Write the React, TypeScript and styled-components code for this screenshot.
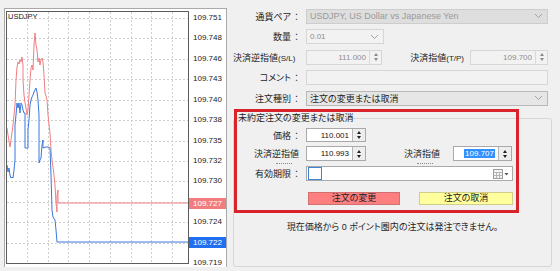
import styled, { createGlobalStyle } from "styled-components";

const GlobalStyle = createGlobalStyle`
  html, body {
    margin: 0;
    padding: 0;
  }
  body {
    width: 560px;
    height: 271px;
    overflow: hidden;
    background: #f0f0f0;
    font-family: "Liberation Sans", "Noto Sans CJK JP", sans-serif;
    color: #1e1e1e;
  }
`;

// chart data, in page pixels (plot area spans 7..187 x 12..262)
const PRICES = [
  "109.751", "109.748", "109.746", "109.743", "109.740", "109.738", "109.735",
  "109.732", "109.730", "109.727", "109.724", "109.722", "109.719",
];
const PLOT_TOP = 11;
const priceY = (i: number) => 18 + i * 20.42;

const ASK_Y = 203;
const BID_Y = 242;

const ASK_LINE =
  "7,128 8,135 10,147 11,140 13,125 15,105 16,80 17,67 18,62 19,64 20,60 21,62 22,57 23,65 23,80 24,95 25,103 26,108 27,115 28,110 29,95 30,80 31,68 32,65 33,70 34,45 35,33 36,45 37,50 38,62 39,58 40,65 41,60 42,58 43,62 44,75 45,93 46,96 47,100 48,115 49,125 50,133 51,150 52,160 53,167 54,175 55,185 56,203 57,212 57,195 58,190 58,203 188,203";
const BID_LINE =
  "7,165 8,172 9,168 10,175 11,178 12,177 13,178 14,170 15,160 15,125 16,115 17,103 18,108 19,103 20,113 21,103 22,105 23,110 24,113 25,113 25,148 28,148 28,130 29,120 30,105 31,100 32,97 33,95 34,92 35,90 36,88 37,92 38,100 39,115 39,163 40,160 41,158 42,145 43,140 43,148 46,147 48,147 50,148 51,175 52,210 53,217 55,220 56,230 57,242 188,242";

const Screen = styled.div`
  display: flex;
  width: 560px;
  height: 271px;
`;

/* ---------- chart ---------- */

const ChartWindow = styled.div`
  box-sizing: border-box;
  margin: 8px 0 0 4px;
  width: 223px;
  height: 259px;
  padding: 2px 0 0 1px;
  display: flex;
  align-items: flex-start;
  background: #fff;
  border: 1px solid #a9a9a9;
  border-bottom: none;
  flex-shrink: 0;
`;

const Plot = styled.div`
  position: relative;
  box-sizing: border-box;
  width: 183px;
  height: 253px;
  border: 1px solid #5c5c5c;
  flex-shrink: 0;

  svg {
    display: block;
  }
`;

const Symbol = styled.span`
  position: absolute;
  left: 1px;
  top: 0;
  font-size: 7.5px;
  line-height: 9px;
  color: #222;
`;

const Axis = styled.div`
  position: relative;
  flex: 1;
  height: 258px;
  margin-top: -2px;
`;

const AxisLabel = styled.span`
  position: absolute;
  left: 4px;
  font-size: 8px;
  line-height: 12px;
  color: #222;
`;

const PriceTag = styled.span<{ $bg: string }>`
  position: absolute;
  left: 0;
  width: 37px;
  height: 11px;
  padding-left: 4px;
  box-sizing: border-box;
  font-size: 8px;
  line-height: 11px;
  color: #fff;
  background: ${(p) => p.$bg};
`;

function Chart() {
  const verticals = Array.from({ length: 8 }, (_, i) => 27 + i * 20.7);
  return (
    <ChartWindow>
      <Plot>
        <svg width="181" height="251" viewBox="7 12 181 251">
          <g stroke="#cfcfcf" strokeWidth="1" strokeDasharray="2 2">
            {PRICES.map((_, i) => (
              <line key={i} x1="7" x2="188" y1={Math.round(priceY(i)) + 0.5} y2={Math.round(priceY(i)) + 0.5} />
            ))}
            {verticals.map((x) => (
              <line key={x} y1="12" y2="263" x1={Math.round(x) + 0.5} x2={Math.round(x) + 0.5} />
            ))}
          </g>
          <polyline points={ASK_LINE} fill="none" stroke="#ef7f82" strokeWidth="1" />
          <polyline points={BID_LINE} fill="none" stroke="#3b78dc" strokeWidth="1" />
        </svg>
        <Symbol>USDJPY</Symbol>
      </Plot>
      <Axis>
        {PRICES.map((p, i) =>
          i === 9 || i === 11 ? null : (
            <AxisLabel key={p} style={{ top: priceY(i) - PLOT_TOP + 2 - 6 }}>
              {p}
            </AxisLabel>
          )
        )}
        <PriceTag $bg="#f27d7f" style={{ top: ASK_Y - PLOT_TOP + 2 - 5.5 }}>
          109.727
        </PriceTag>
        <PriceTag $bg="#1f6ff0" style={{ top: BID_Y - PLOT_TOP + 2 - 5.5 }}>
          109.722
        </PriceTag>
      </Axis>
    </ChartWindow>
  );
}

/* ---------- order form ---------- */

const FormPane = styled.div`
  flex: 1;
  display: flex;
  flex-direction: column;
  padding-top: 8px;
  font-size: 9px;
  font-feature-settings: "palt";
`;

const Row = styled.div<{ $h?: number }>`
  display: flex;
  align-items: center;
  height: ${(p) => p.$h ?? 16}px;
  & + & {
    margin-top: 4.5px;
  }
`;

const Label = styled.div<{ $w: number; $left?: number; $right?: number }>`
  flex-shrink: 0;
  box-sizing: border-box;
  width: ${(p) => p.$w}px;
  padding-left: ${(p) => p.$left ?? 0}px;
  padding-right: ${(p) => p.$right ?? 0}px;
  text-align: ${(p) => (p.$left ? "left" : "right")};
  white-space: nowrap;
  color: #1e1e1e;
`;

const Colon = styled.span`
  display: inline-block;
  width: 11px;
  text-align: center;
  font-feature-settings: normal;
`;

const Small = styled.span`
  font-size: 8px;
`;

type Tone = "disabled" | "muted" | "select" | "white";

const toneStyles: Record<Tone, { bg: string; border: string; color: string }> = {
  disabled: { bg: "#dedede", border: "#cdcdcd", color: "#9a9a9a" },
  muted: { bg: "#f2f2f2", border: "#d6d6d6", color: "#8e8e8e" },
  select: { bg: "#e6e6e6", border: "#b8b8b8", color: "#1e1e1e" },
  white: { bg: "#ffffff", border: "#a9a9a9", color: "#111" },
};

const Box = styled.div<{ $w: number; $tone: Tone; $ml?: number; $h?: number }>`
  box-sizing: border-box;
  display: flex;
  align-items: center;
  flex-shrink: 0;
  width: ${(p) => p.$w}px;
  height: ${(p) => p.$h ?? 15}px;
  margin-left: ${(p) => p.$ml ?? 4}px;
  background: ${(p) => toneStyles[p.$tone].bg};
  border: 1px solid ${(p) => toneStyles[p.$tone].border};
  color: ${(p) => toneStyles[p.$tone].color};
`;

const Value = styled.span<{ $right?: boolean; $num?: boolean }>`
  flex: 1;
  padding: 0 3px;
  text-align: ${(p) => (p.$right ? "right" : "left")};
  font-size: ${(p) => (p.$num ? 8 : 9)}px;
  white-space: nowrap;
  overflow: hidden;
`;

const Selected = styled.span`
  background: #3390ff;
  color: #fff;
  padding: 0 1px;
`;

const Spin = styled.div<{ $dark?: boolean; $w: number }>`
  box-sizing: border-box;
  width: ${(p) => p.$w}px;
  height: 100%;
  display: flex;
  flex-direction: column;
  align-items: center;
  justify-content: center;
  gap: 2px;
  border-left: 1px solid ${(p) => (p.$dark ? "#b5b5b5" : "#dadada")};
  background: ${(p) => (p.$dark ? "#eeeeee" : "transparent")};
`;

const Tri = styled.span<{ $down?: boolean; $dark?: boolean }>`
  width: 0;
  height: 0;
  border-left: 2.5px solid transparent;
  border-right: 2.5px solid transparent;
  ${(p) => (p.$down ? "border-top" : "border-bottom")}: 3px solid
    ${(p) => (p.$dark ? "#222" : "#8a8a8a")};
`;

function Spinner({ dark, w }: { dark?: boolean; w: number }) {
  return (
    <Spin $dark={dark} $w={w}>
      <Tri $dark={dark} />
      <Tri $dark={dark} $down />
    </Spin>
  );
}

const Chevron = () => (
  <svg width="9" height="6" viewBox="0 0 9 6" style={{ marginRight: 4 }}>
    <polyline points="1,1 4.5,4.5 8,1" fill="none" stroke="#a4a4a4" strokeWidth="1" />
  </svg>
);

const GroupBox = styled.div`
  box-sizing: border-box;
  margin: 12px 0 0 6px;
  width: 319px;
  height: 149px;
  border: 1px solid #d6d6d6;
  border-radius: 3px;
  display: flex;
  flex-direction: column;
  align-items: center;
`;

const Highlight = styled.div`
  box-sizing: border-box;
  align-self: flex-start;
  margin-top: -10px;
  width: 285px;
  height: 104px;
  border: 3px solid #d9232c;
  display: flex;
  flex-direction: column;
`;

const GroupTitle = styled.div`
  height: 13px;
  line-height: 13px;
  padding-left: 1px;
  white-space: nowrap;
`;

const SubRow = styled.div<{ $h: number; $mt: number }>`
  display: flex;
  align-items: center;
  height: ${(p) => p.$h}px;
  margin-top: ${(p) => p.$mt}px;
`;

/* a label whose "(S/L)" second line is cut off by the field height:
   only the tops of its glyphs show, as a short dotted trace */
const StackedLabel = styled.div<{ $w: number; $right: number }>`
  position: relative;
  flex-shrink: 0;
  box-sizing: border-box;
  width: ${(p) => p.$w}px;
  padding-right: ${(p) => p.$right}px;
  text-align: right;
  white-space: nowrap;

  &::after {
    content: "";
    position: absolute;
    right: ${(p) => p.$right + 7}px;
    bottom: -4px;
    width: 16px;
    border-top: 1px dotted #8a8a8a;
  }
`;

const CheckSquare = styled.span`
  box-sizing: border-box;
  width: 14px;
  height: 13px;
  margin-left: 1px;
  border: 1px solid #3f84d4;
  background: #fff;
`;

const Fill = styled.span`
  flex: 1;
`;

const ButtonRow = styled.div`
  display: flex;
  gap: 19px;
  margin: 11px 0 0 71px;
  height: 13px;
`;

const ActionButton = styled.div<{ $tone: "change" | "cancel" }>`
  box-sizing: border-box;
  width: ${(p) => (p.$tone === "change" ? 92 : 94)}px;
  height: 13px;
  line-height: 11px;
  text-align: center;
  color: #222;
  background: ${(p) => (p.$tone === "change" ? "#fd7f80" : "#ffff9d")};
  border: 1px solid ${(p) => (p.$tone === "change" ? "#d07070" : "#cfcf8a")};
`;

const Notice = styled.div`
  margin-top: 8px;
  line-height: 12px;
  color: #1e1e1e;
`;

const CalendarIcon = () => (
  <svg width="16" height="10" viewBox="0 0 16 10" style={{ marginRight: 3 }}>
    <rect x="0.5" y="0.5" width="9" height="9" fill="#f4f4f4" stroke="#9a9a9a" />
    <path d="M0.5 3.5h9M0.5 6.5h9M3.5 3.5v6M6.5 3.5v6" stroke="#b4b4b4" />
    <path d="M11.5 4h4l-2 2.5z" fill="#555" />
  </svg>
);

function OrderForm() {
  return (
    <FormPane>
      <Row>
        <Label $w={75}>
          通貨ペア<Colon>：</Colon>
        </Label>
        <Box $w={242} $tone="disabled">
          <Value>USDJPY, US Dollar vs Japanese Yen</Value>
          <Chevron />
        </Box>
      </Row>
      <Row>
        <Label $w={75}>
          数量<Colon>：</Colon>
        </Label>
        <Box $w={78} $tone="muted">
          <Value $num>0.01</Value>
          <Chevron />
        </Box>
      </Row>
      <Row>
        <Label $w={75} $left={6}>
          決済逆指値<Small>(S/L)</Small>
        </Label>
        <Box $w={76} $tone="muted">
          <Value $right $num>111.000</Value>
          <Spinner w={12} />
        </Box>
        <Label $w={84} $right={2}>
          決済指値<Small>(T/P)</Small>
        </Label>
        <Box $w={78} $tone="muted">
          <Value $right $num>109.700</Value>
          <Spinner w={12} />
        </Box>
      </Row>
      <Row>
        <Label $w={75}>
          コメント<Colon>：</Colon>
        </Label>
        <Box $w={242} $tone="muted" />
      </Row>
      <Row>
        <Label $w={75}>
          注文種別<Colon>：</Colon>
        </Label>
        <Box $w={242} $tone="select">
          <Value>注文の変更または取消</Value>
          <Chevron />
        </Box>
      </Row>

      <GroupBox>
        <Highlight>
          <GroupTitle>未約定注文の変更または取消</GroupTitle>
          <SubRow $h={14} $mt={3}>
            <Label $w={65}>
              価格<Colon>：</Colon>
            </Label>
            <Box $w={60} $h={14} $tone="white">
              <Value $right $num>110.001</Value>
              <Spinner dark w={13} />
            </Box>
          </SubRow>
          <SubRow $h={15} $mt={4}>
            <StackedLabel $w={65} $right={3}>
              決済逆指値
            </StackedLabel>
            <Box $w={60} $tone="white">
              <Value $right $num>110.993</Value>
              <Spinner dark w={13} />
            </Box>
            <StackedLabel $w={83} $right={9}>
              決済指値
            </StackedLabel>
            <Box $w={59} $tone="white">
              <Value $right $num>
                <Selected>109.707</Selected>
              </Value>
              <Spinner dark w={13} />
            </Box>
          </SubRow>
          <SubRow $h={15} $mt={5}>
            <Label $w={65}>
              有効期限<Colon>：</Colon>
            </Label>
            <Box $w={207} $tone="white">
              <CheckSquare />
              <Fill />
              <CalendarIcon />
            </Box>
          </SubRow>
          <ButtonRow>
            <ActionButton $tone="change">注文の変更</ActionButton>
            <ActionButton $tone="cancel">注文の取消</ActionButton>
          </ButtonRow>
        </Highlight>
        <Notice>現在価格から 0 ポイント圏内の注文は発注できません。</Notice>
      </GroupBox>
    </FormPane>
  );
}

export default function App() {
  return (
    <>
      <GlobalStyle />
      <Screen>
        <Chart />
        <OrderForm />
      </Screen>
    </>
  );
}
